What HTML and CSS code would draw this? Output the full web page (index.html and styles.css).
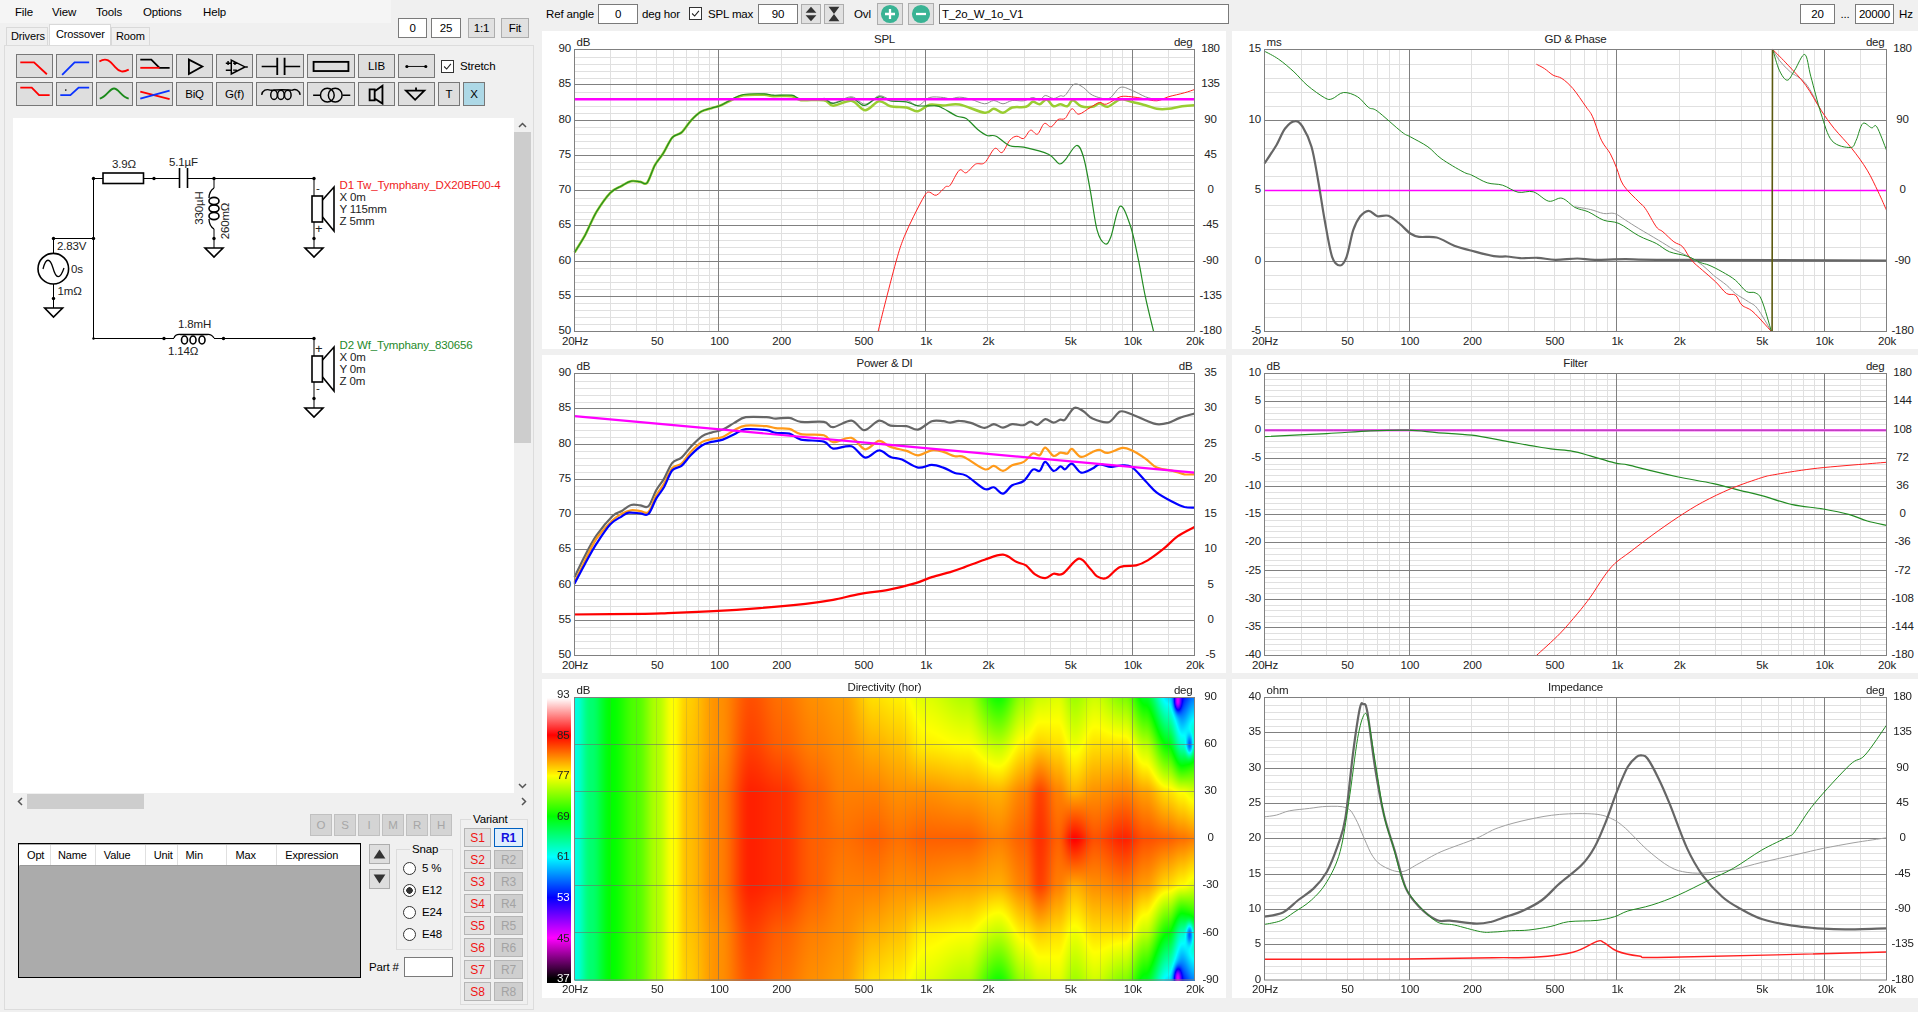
FILE: index.html
```html
<!DOCTYPE html>
<html lang="en">
<head>
  <meta charset="UTF-8">
  <title>VituixCAD</title>
  <link rel="stylesheet" href="styles.css">
</head>
<body>
  <div class="left-panel">
    <div class="top-strip">
      <div class="menu-col">
        <div class="menu-bar">
          <span>File</span><span>View</span><span>Tools</span><span>Options</span><span>Help</span>
        </div>
        <div class="tabs">
          <div class="tab">Drivers</div>
          <div class="tab active">Crossover</div>
          <div class="tab">Room</div>
        </div>
      </div>
      <div class="zoom-controls">
        <div class="field zoom-a">0</div>
        <div class="field zoom-b">25</div>
        <div class="btn zoom-c">1:1</div>
        <div class="btn zoom-d">Fit</div>
      </div>
    </div>

    <div class="tab-page">
      <div class="parts">
        <div class="parts-row">
          <div class="tool"><svg viewBox="0 0 37 24"><path class="thick red" d="M3 8H18L32 21"/></svg></div>
          <div class="tool"><svg viewBox="0 0 37 24"><path class="thick blue" d="M5 21.7L18.6 8H34.5"/></svg></div>
          <div class="tool"><svg viewBox="0 0 37 24"><path class="thick red" d="M2 7C10 2 14 7 19 13S28 19 34 16"/></svg></div>
          <div class="tool"><svg viewBox="0 0 37 24"><path class="thick black" d="M3 5H15L24 14H35"/><path class="thick red" d="M3 14H24"/></svg></div>
          <div class="tool"><svg viewBox="0 0 37 24"><path class="thick black" d="M12.4 5L27 12.5L12.4 20.7Z"/></svg></div>
          <div class="tool"><svg viewBox="0 0 37 24"><path class="mid black" d="M15 5.5L30 13L15 20.7ZM9 9H15M9 16.7H15M30 13H33M11.5 6.5V11M17 9H21M19 7V11M17 16.5H21"/></svg></div>
          <div class="tool wide"><svg viewBox="0 0 48 24"><path class="mid black" d="M4 12.5H21M29 12.5H46"/><path class="thick black" d="M21 3V21.7M29 3V21.7"/></svg></div>
          <div class="tool wide"><svg viewBox="0 0 48 24"><rect class="thick black" x="5" y="7.5" width="38" height="10"/></svg></div>
          <div class="tool">LIB</div>
          <div class="tool"><svg viewBox="0 0 37 24"><path class="thin black" d="M8 12.5H28.6"/><circle cx="8" cy="12.5" r="1.7"/><circle cx="28.6" cy="12.5" r="1.7"/></svg></div>
          <label class="stretch">
            <span class="check"><svg viewBox="0 0 13 13"><path d="M2.5 6.5L5.5 9.5L10.5 3.5"/></svg></span>
            Stretch
          </label>
        </div>
        <div class="parts-row">
          <div class="tool"><svg viewBox="0 0 37 24"><path class="thick red" d="M3 5H15.5L23.5 13.3H35"/></svg></div>
          <div class="tool"><svg viewBox="0 0 37 24"><path class="thick blue" d="M3 13.3H14L23 5H34.5"/><circle cx="9" cy="7.7" r="0.9"/></svg></div>
          <div class="tool"><svg viewBox="0 0 37 24"><path class="thick green" d="M2.4 17C10 15 13 6 18 6S26 15 34 17"/></svg></div>
          <div class="tool"><svg viewBox="0 0 37 24"><path class="thick red" d="M3 9.3L35 17.7"/><path class="thick blue" d="M3 17L35 8.3"/></svg></div>
          <div class="tool">BiQ</div>
          <div class="tool">G(f)</div>
          <div class="tool wide"><svg viewBox="0 0 48 24"><path class="mid black" d="M4 13C5 8 9 6 14 8M37 8C41 6 45 8 46 13M14 8C19 7 35 7 37 8"/><ellipse class="mid black" cx="17.5" cy="13" rx="3.6" ry="5"/><ellipse class="mid black" cx="25" cy="13" rx="3.6" ry="5"/><ellipse class="mid black" cx="32.5" cy="13" rx="3.6" ry="5"/></svg></div>
          <div class="tool wide"><svg viewBox="0 0 48 24"><path class="mid black" d="M4.5 13.3H12.5M36.5 13.3H45"/><circle class="mid black" cx="20" cy="13.3" r="7.5"/><circle class="mid black" cx="28.6" cy="13.3" r="7.5"/></svg></div>
          <div class="tool"><svg viewBox="0 0 37 24"><path class="thick black" d="M11 7H16.5V19H11ZM16.5 9L25 3V22.5L16.5 17"/></svg></div>
          <div class="tool"><svg viewBox="0 0 37 24"><path class="thick black" d="M18 5V8.3M7 8.3H27L17 18.3Z"/></svg></div>
          <div class="tool small">T</div>
          <div class="tool small on">X</div>
        </div>
      </div>

      <div class="canvas-wrap">
        <div class="canvas">
          <svg class="schematic" viewBox="13 118 501 675">
            <g class="wire">
              <path d="M93.5 178.5H103M143.5 178.5H179.5M187.5 178.5H314M93.5 178.5V338.5M53.5 238.5H93.5M53.5 238.5V253M53.5 284V308"/>
              <path d="M214 178.5V188M214 229V248M314 178.5V196M314 222V248"/>
              <path d="M93.5 338.5H174M214 338.5H314M314 338.5V356M314 382V408"/>
            </g>
            <g class="part">
              <rect x="103" y="173" width="40.5" height="10.5"/>
              <path d="M179.5 168V188M187.5 168V188"/>
              <path class="coil" d="M214 188C211 190 209 193 209 198M209 219C209 223 211 227 214 229"/>
              <ellipse cx="214" cy="201" rx="5" ry="3.6"/>
              <ellipse cx="214" cy="208.5" rx="5" ry="3.6"/>
              <ellipse cx="214" cy="216" rx="5" ry="3.6"/>
              <rect x="312" y="196" width="10.5" height="26"/>
              <path d="M322.5 200L334 187V231L322.5 217"/>
              <rect x="312" y="356" width="10.5" height="26"/>
              <path d="M322.5 360L334 347V391L322.5 377"/>
              <path d="M205 248H223L214 257ZM305 248H323L314 257ZM305 408H323L314 417ZM44.7 308H62.6L53.5 317Z"/>
              <circle cx="53.3" cy="268.7" r="15.3"/>
              <path class="coil" d="M43 269C46 257 50 258 53 268C56 279 60 280 64 268"/>
              <path class="coil" d="M174 338C175 335 178 334 181 334.5H207C210 334 212 335 214 338"/>
              <ellipse cx="184.5" cy="340" rx="3" ry="4"/>
              <ellipse cx="193" cy="340" rx="3" ry="4"/>
              <ellipse cx="202" cy="340" rx="3" ry="4"/>
            </g>
            <g class="dot">
              <circle cx="93.5" cy="178.5" r="1.7"/><circle cx="154" cy="178.5" r="1.7"/><circle cx="214" cy="178.5" r="1.7"/>
              <circle cx="314" cy="178.5" r="1.7"/><circle cx="214" cy="238.5" r="1.7"/><circle cx="314" cy="238.5" r="1.7"/>
              <circle cx="53.5" cy="238.5" r="1.7"/><circle cx="93.5" cy="238.5" r="1.7"/><circle cx="53.5" cy="298.5" r="1.7"/>
              <circle cx="93.5" cy="338.5" r="1.2"/><circle cx="164" cy="338.5" r="1.7"/><circle cx="223.5" cy="338.5" r="1.7"/>
              <circle cx="314" cy="338.5" r="1.7"/><circle cx="314" cy="398.5" r="1.7"/>
            </g>
            <g class="label">
              <text x="112" y="168">3.9Ω</text>
              <text x="169" y="166">5.1µF</text>
              <text x="199" y="208" text-anchor="middle" transform="rotate(-90 199 208) translate(0 4)">330µH</text>
              <text x="225" y="221" text-anchor="middle" transform="rotate(-90 225 221) translate(0 4)">260mΩ</text>
              <text x="57" y="250">2.83V</text>
              <text x="71" y="273">0s</text>
              <text x="57.5" y="295">1mΩ</text>
              <text x="178" y="328">1.8mH</text>
              <text x="168" y="355">1.14Ω</text>
              <text x="316" y="192">-</text>
              <text class="sign" x="315" y="233">+</text>
              <text class="sign" x="315" y="353">+</text>
              <text x="316" y="392">-</text>
              <text class="red-text" x="339.5" y="189">D1 Tw_Tymphany_DX20BF00-4</text>
              <text x="339.5" y="201">X 0m</text>
              <text x="339.5" y="213">Y 115mm</text>
              <text x="339.5" y="225">Z 5mm</text>
              <text class="green-text" x="339.5" y="349">D2 Wf_Tymphany_830656</text>
              <text x="339.5" y="361">X 0m</text>
              <text x="339.5" y="373">Y 0m</text>
              <text x="339.5" y="385">Z 0m</text>
            </g>
          </svg>
        </div>
        <div class="vscroll">
          <svg viewBox="0 0 17 14"><path d="M5 9L8.5 5.5L12 9"/></svg>
          <div class="vthumb"></div>
          <div class="fill"></div>
          <svg viewBox="0 0 17 14"><path d="M5 5L8.5 8.5L12 5"/></svg>
        </div>
        <div class="hscroll">
          <svg viewBox="0 0 14 15"><path d="M9 4L5.5 7.5L9 11"/></svg>
          <div class="hthumb"></div>
          <div class="fill"></div>
          <svg viewBox="0 0 14 15"><path d="M5 4L8.5 7.5L5 11"/></svg>
        </div>
      </div>

      <div class="bottom">
        <div class="params">
          <div class="flags">
            <div class="flag">O</div><div class="flag">S</div><div class="flag">I</div>
            <div class="flag">M</div><div class="flag">R</div><div class="flag">H</div>
          </div>
          <div class="params-body">
            <div class="opt-table">
              <div class="opt-head">
                <span class="c-opt">Opt</span>
                <span class="c-name">Name</span>
                <span class="c-value">Value</span>
                <span class="c-unit">Unit</span>
                <span class="c-min">Min</span>
                <span class="c-max">Max</span>
                <span class="c-expr">Expression</span>
              </div>
            </div>
            <div class="side">
              <div class="side-top">
                <div class="arrows">
                  <div class="btn arrow"><svg viewBox="0 0 21 20"><path d="M4 15L10.5 5L17 15Z"/></svg></div>
                  <div class="btn arrow"><svg viewBox="0 0 21 20"><path d="M4 5H17L10.5 15Z"/></svg></div>
                </div>
                <fieldset class="snap">
                  <legend>Snap</legend>
                  <div class="radio-row"><span class="radio"></span>5 %</div>
                  <div class="radio-row"><span class="radio checked"></span>E12</div>
                  <div class="radio-row"><span class="radio"></span>E24</div>
                  <div class="radio-row"><span class="radio"></span>E48</div>
                </fieldset>
              </div>
              <div class="part-row">
                <span>Part #</span>
                <div class="field part-input"></div>
              </div>
            </div>
          </div>
        </div>
        <fieldset class="variant">
          <legend>Variant</legend>
          <div class="variant-grid">
            <div class="s-btn">S1</div><div class="r-btn current">R1</div>
            <div class="s-btn">S2</div><div class="r-btn">R2</div>
            <div class="s-btn">S3</div><div class="r-btn">R3</div>
            <div class="s-btn">S4</div><div class="r-btn">R4</div>
            <div class="s-btn">S5</div><div class="r-btn">R5</div>
            <div class="s-btn">S6</div><div class="r-btn">R6</div>
            <div class="s-btn">S7</div><div class="r-btn">R7</div>
            <div class="s-btn">S8</div><div class="r-btn">R8</div>
          </div>
        </fieldset>
      </div>
    </div>
  </div>

  <div class="right-panel">
    <div class="toolbar">
      <span class="t-ref">Ref angle</span>
      <div class="field t-angle">0</div>
      <span class="t-deg">deg hor</span>
      <span class="check t-check"><svg viewBox="0 0 13 13"><path d="M2.5 6.5L5.5 9.5L10.5 3.5"/></svg></span>
      <span class="t-spl">SPL max</span>
      <div class="field t-max">90</div>
      <div class="btn t-spin"><svg viewBox="0 0 20 20"><path d="M10 2L16 8.5H4ZM4 11.5H16L10 18Z"/></svg></div>
      <div class="btn t-spin"><svg viewBox="0 0 20 20"><path d="M4 2H16L10 10ZM10 10L16 18H4Z"/></svg></div>
      <span class="t-ovl">Ovl</span>
      <div class="btn t-round"><svg viewBox="0 0 25 22"><circle cx="12.5" cy="11" r="10"/><path d="M12.5 5.5V16.5M7 11H18"/></svg></div>
      <div class="btn t-round"><svg viewBox="0 0 25 22"><circle cx="12.5" cy="11" r="10"/><path d="M7 11H18"/></svg></div>
      <div class="field t-name">T_2o_W_1o_V1</div>
      <div class="field t-from">20</div>
      <span class="t-dots">...</span>
      <div class="field t-to">20000</div>
      <span class="t-hz">Hz</span>
    </div>
    <div class="charts">
      <div class="chart-card" id="chart-spl"></div>
      <div class="chart-card" id="chart-gd"></div>
      <div class="chart-card" id="chart-power"></div>
      <div class="chart-card" id="chart-filter"></div>
      <div class="chart-card" id="chart-dir"></div>
      <div class="chart-card" id="chart-imp"></div>
    </div>
  </div>

  <script src="charts.js"></script>
</body>
</html>
```

FILE: styles.css
```css
:root {
  --bg: #f0f0f0;
  --btn: #e1e1e1;
  --btn-border: #adadad;
  --field-border: #7a7a7a;
}
* { box-sizing: border-box; margin: 0; padding: 0; }
html, body { height: 100%; overflow: hidden; }
body {
  display: flex;
  width: 1918px;
  height: 1012px;
  background: var(--bg);
  color: #000;
  font-family: "Liberation Sans", Arial, sans-serif;
  font-size: 11px;
  letter-spacing: -0.15px;
}

.field {
  display: flex;
  align-items: center;
  justify-content: center;
  background: #fff;
  border: 1px solid var(--field-border);
  height: 20px;
  font-size: 11.5px;
}
.btn {
  display: flex;
  align-items: center;
  justify-content: center;
  background: var(--btn);
  border: 1px solid var(--btn-border);
}

/* left side */
.left-panel { width: 534px; flex: none; }
.top-strip { display: flex; height: 45px; }
.menu-col { width: 395px; }
.menu-bar {
  display: flex;
  width: 391px;
  height: 23px;
  align-items: center;
  padding-left: 15px;
  background: #f5f5f5;
  font-size: 11.5px;
}
.menu-bar span:nth-child(1) { width: 37px; }
.menu-bar span:nth-child(2) { width: 44px; }
.menu-bar span:nth-child(3) { width: 47px; }
.menu-bar span:nth-child(4) { width: 60px; }
.tabs { display: flex; align-items: flex-end; height: 22px; padding-left: 6px; }
.tab {
  height: 18px;
  padding: 2px 0 0 4px;
  width: 42px;
  background: #f0f0f0;
  border: 1px solid #d9d9d9;
  border-bottom: none;
  font-size: 11px;
}
.tab:nth-child(3) { width: 39px; }
.tab.active {
  width: 62px;
  height: 21px;
  margin: 0 0 0 1px;
  padding: 3px 0 0 6px;
  background: #fff;
}
.zoom-controls { display: flex; margin-top: 18px; height: 20px; font-size: 11.5px; }
.zoom-a { width: 29px; margin-left: 3px; }
.zoom-b { width: 30px; margin-left: 4px; }
.zoom-c { width: 27px; margin-left: 7px; }
.zoom-d { width: 28px; margin-left: 6px; }

.tab-page {
  margin-left: 4px;
  height: 965px;
  border: 1px solid #dcdcdc;
}
.parts { padding: 8px 0 0 11px; height: 72px; }
.parts-row { display: flex; gap: 3px; height: 24px; margin-bottom: 4px; }
.tool {
  display: flex;
  align-items: center;
  justify-content: center;
  width: 37px;
  height: 24px;
  background: #dedede;
  border: 1px solid #777;
  font-size: 11.5px;
}
.tool svg { width: 100%; height: 100%; }
.tool.wide { width: 48px; }
.tool.small { width: 22px; }
.tool.on { background: #add8e6; }
.tool path, .tool rect, .tool circle, .tool ellipse { fill: none; }
.tool circle:not([class]) { fill: #000; }
.thick { stroke-width: 2px; }
.mid { stroke-width: 1.6px; }
.thin { stroke-width: 1px; }
.red { stroke: #f00; }
.blue { stroke: #0a32ff; }
.green { stroke: #1a8a1a; }
.black { stroke: #000; }
.stretch { display: flex; align-items: center; gap: 6px; margin-left: 3px; font-size: 11.5px; }
.check {
  display: block;
  width: 13px;
  height: 13px;
  background: #fff;
  border: 1px solid #333;
}
.check svg { display: block; width: 11px; height: 11px; }
.check path { fill: none; stroke: #222; stroke-width: 1.3px; }

.canvas-wrap {
  display: grid;
  grid-template-columns: 501px 17px;
  grid-template-rows: 675px 17px;
  margin-left: 8px;
}
.canvas { background: #fff; }
.schematic { display: block; width: 501px; height: 675px; }
.wire path { fill: none; stroke: #000; stroke-width: 1px; }
.part rect, .part path, .part circle, .part ellipse { fill: none; stroke: #000; stroke-width: 1.6px; }
.part .coil { stroke-width: 1.3px; }
.dot circle { fill: #000; }
.label text { font-size: 11.5px; fill: #222; }
.label .sign { font-size: 13px; }
.label .red-text { fill: #f01c1c; }
.label .green-text { fill: #1f8a2a; }
.vscroll { display: flex; flex-direction: column; }
.vscroll svg { width: 17px; height: 14px; flex: none; }
.vthumb { height: 311px; background: #cdcdcd; flex: none; }
.fill { flex: 1; }
.hscroll { display: flex; grid-column: 1 / 3; align-items: center; }
.hscroll svg { width: 14px; height: 15px; flex: none; }
.vscroll path, .hscroll path { fill: none; stroke: #555; stroke-width: 1.5px; }
.hthumb { width: 117px; height: 15px; background: #cdcdcd; flex: none; }

.bottom { display: flex; padding-left: 13px; }
.params { width: 442px; }
.flags { display: flex; justify-content: flex-end; gap: 2px; padding-right: 8px; height: 33px; padding-top: 4px; }
.flag {
  display: flex;
  align-items: center;
  justify-content: center;
  width: 22px;
  height: 22px;
  background: #d4d4d4;
  border: 1px solid #c0c0c0;
  color: #a6a6a6;
  font-size: 11.5px;
}
.params-body { display: flex; }
.opt-table {
  width: 343px;
  height: 135px;
  background: #ababab;
  border: 1px solid #000;
  padding-top: 1px;
}
.opt-head {
  display: flex;
  height: 21px;
  background: #fff;
  border-left: 1px solid #fff;
  border-bottom: 1px solid #999;
}
.opt-head span {
  display: flex;
  align-items: center;
  height: 20px;
  border-right: 1px solid #e0e0e0;
}
.c-opt { width: 31px; padding-left: 7px; }
.c-name { width: 45px; padding-left: 7px; }
.c-value { width: 50px; padding-left: 8px; }
.c-unit { width: 32px; padding-left: 8px; }
.c-min { width: 50px; padding-left: 8px; }
.c-max { width: 50px; padding-left: 8px; }
.c-expr { width: 83px; padding-left: 8px; border-right: none !important; }
.side { width: 84px; margin-left: 8px; }
.side-top { display: flex; }
.arrows { display: flex; flex-direction: column; gap: 5px; width: 27px; padding-top: 1px; }
.arrow { width: 21px; height: 20px; background: #dedede; }
.arrow svg { width: 21px; height: 20px; }
.arrow path { fill: #333; }
fieldset { border: 1px solid #dcdcdc; }
legend { margin-left: 7px; padding: 0 2px; line-height: 13px; font-size: 11.5px; }
.snap { width: 57px; height: 107px; padding: 1px 0 0 6px; }
.radio-row { display: flex; align-items: center; height: 22px; gap: 6px; font-size: 11.5px; }
.radio {
  display: block;
  width: 13px;
  height: 13px;
  border: 1px solid #333;
  border-radius: 50%;
  background: #fff;
}
.radio.checked { background: radial-gradient(circle, #333 0 3px, #fff 3.5px); }
.part-row { display: flex; align-items: center; justify-content: space-between; margin-top: 7px; font-size: 11.5px; }
.part-input { width: 49px; height: 20px; }
.variant { width: 68px; height: 192px; margin: 3px 0 0 0; padding: 2px 0 0 3px; }
.variant-grid { display: grid; grid-template-columns: 27px 29px; grid-auto-rows: 19px; gap: 3px 3px; }
.s-btn, .r-btn {
  display: flex;
  align-items: center;
  justify-content: center;
  font-size: 12px;
  border: 1px solid #b5b5b5;
}
.s-btn { background: #e1e1e1; color: #f01414; }
.r-btn { background: #cfcfcf; color: #a3a3a3; }
.r-btn.current {
  background: #dfeefc;
  color: #1010e0;
  font-weight: bold;
  border: 1px solid #0060c0;
}

/* right side */
.right-panel { flex: 1; margin-left: 8px; }
.toolbar { display: flex; align-items: center; height: 31px; padding-bottom: 4px; font-size: 11.5px; }
.toolbar svg { display: block; }
.t-ref { margin-left: 4px; width: 52px; }
.t-angle { width: 40px; }
.t-deg { margin-left: 4px; width: 43px; }
.t-check { margin-left: 4px; }
.t-spl { margin-left: 6px; width: 50px; }
.t-max { width: 40px; }
.t-spin { width: 20px; height: 20px; margin-left: 3px; }
.t-spin svg { width: 18px; height: 18px; }
.t-spin path { fill: #333; }
.t-ovl { margin-left: 10px; width: 23px; }
.t-round { width: 26px; height: 22px; margin-right: 5px; }
.t-round svg { width: 24px; height: 20px; }
.t-round circle { fill: #39b394; }
.t-round path { fill: none; stroke: #fff; stroke-width: 2.5px; }
.t-name { width: 290px; justify-content: flex-start; padding-left: 2px; margin-right: 571px; }
.t-from { width: 35px; }
.t-dots { width: 20px; text-align: center; }
.t-to { width: 39px; }
.t-hz { margin-left: 5px; }

.charts {
  display: grid;
  grid-template-columns: 684px 686px;
  grid-template-rows: 318px 318px 319px;
  gap: 6px;
}
.chart-card { position: relative; background: #fff; }
.chart-card svg { position: absolute; top: 0; left: 0; width: 100%; height: 100%; }
.chart-card canvas { position: absolute; }
.chart-card text { font-size: 11.5px; fill: #222; letter-spacing: -0.2px; }
.chart-card .title { font-size: 11.5px; }
.chart-card .on-dark { fill: #fff; }
.grid-minor { stroke: #e0e0e0; stroke-width: 1; fill: none; }
.grid-major { stroke: #808080; stroke-width: 1; fill: none; }
.dir-minor { stroke: rgba(120, 120, 120, 0.2); stroke-width: 1; fill: none; }
.dir-major { stroke: rgba(110, 110, 110, 0.6); stroke-width: 1; fill: none; }
.curve { fill: none; stroke-linejoin: round; }
```

FILE: charts.js
```js
// log frequency axis shared by every plot
const FREQ_LABELS = [[20, '20Hz'], [50, '50'], [100, '100'], [200, '200'], [500, '500'], [1000, '1k'], [2000, '2k'], [5000, '5k'], [10000, '10k'], [20000, '20k']];
const MINOR_FREQS = [30, 40, 60, 70, 80, 90, 200, 300, 400, 500, 600, 700, 800, 900, 2000, 3000, 4000, 5000, 6000, 7000, 8000, 9000, 20, 50, 15000, 20000];
const DECADES = [100, 1000, 10000];

const LEFT_X = 32.5;
const LEFT_W = 620;
const RIGHT_W = 622;

// curves are traced in each plot's own units, see `trace` in the config
const SPL_LOW = '97,757 120,705 145,635 175,578 200,557 220,543 240,545 255,548 272,495 290,460 310,412 330,397 350,362 372,335 395,324 415,316';

const CHARTS = {
  'chart-spl': {
    title: 'SPL', unitL: 'dB', unitR: 'deg', width: LEFT_W, top: 18.5, height: 282,
    left: [90, 85, 80, 75, 70, 65, 60, 55, 50],
    right: [180, 135, 90, 45, 0, -45, -90, -135, -180],
    trace: [97, 148, 1447, 994],
    curves: [
      { color: '#9acd32', w: 2.5, pts: SPL_LOW + ' 440,299 465,285 510,284 530,288 570,288 590,300 640,300 660,317 700,302 730,330 760,303 785,318 820,322 845,333 870,314 900,316 935,313 990,338 1010,326 1030,338 1050,322 1080,320 1095,305 1110,312 1125,298 1140,318 1155,312 1170,318 1182,300 1200,318 1225,320 1240,310 1258,320 1285,298 1310,305 1340,315 1365,326 1390,326 1420,318 1447,315' },
      { color: '#8c8c8c', w: 1, pts: '640,293 660,308 700,290 730,312 760,287 785,298 820,300 845,316 870,292 900,292 915,296 935,291 960,297 990,311 1010,301 1030,311 1050,301 1075,302 1095,292 1110,300 1122,286 1140,295 1155,287 1165,286 1185,252 1205,262 1225,285 1260,295 1285,262 1310,270 1340,290 1360,297' },
      { color: '#ff2020', w: 1, pts: '758,994 775,900 800,770 815,710 835,650 860,585 870,576 885,585 905,560 915,555 935,510 950,518 970,492 990,488 1012,445 1028,457 1045,420 1060,408 1075,415 1090,390 1105,402 1120,370 1135,380 1150,358 1165,355 1180,326 1195,342 1220,322 1240,307 1255,312 1285,290 1310,290 1335,295 1365,302 1390,290 1425,278 1447,268' },
      { color: '#228b22', w: 1.2, pts: SPL_LOW + ' 440,297 465,283 510,281 530,285 570,285 590,296 640,296 660,310 700,294 728,316 760,290 785,302 820,305 845,317 885,317 900,325 930,348 950,355 975,388 995,406 1015,408 1045,437 1075,441 1130,463 1152,491 1165,480 1190,436 1205,470 1220,570 1235,690 1252,731 1265,710 1285,618 1308,680 1325,780 1340,890 1358,994' },
      { color: '#ff00ff', w: 2.5, pts: '97,297 1447,297' },
    ],
  },
  'chart-gd': {
    title: 'GD & Phase', unitL: 'ms', unitR: 'deg', width: RIGHT_W, top: 18.5, height: 282,
    left: [15, 10, 5, 0, -5],
    right: [180, 90, 0, -90, -180],
    trace: [78, 148, 1494, 994],
    curves: [
      { color: '#ff00ff', w: 1.5, pts: '78,571 1494,571' },
      { color: '#666666', w: 2.2, pts: '78,490 105,435 125,385 148,363 165,380 185,440 200,540 215,660 232,770 250,796 265,770 280,690 295,650 315,632 335,648 360,647 385,670 410,700 430,710 470,712 510,737 545,750 600,768 630,769 660,774 700,773 740,779 790,775 830,779 900,777 1000,779 1494,781' },
      { color: '#999999', w: 1, pts: '785,620 820,628 850,640 875,640 900,660 930,685 975,720 1010,748 1045,770 1075,795 1100,825 1130,855 1150,880 1180,905 1200,925 1232,994' },
      { color: '#999999', w: 1, pts: '1235,148 1250,180 1275,215 1310,250 1345,330' },
      { color: '#ff2020', w: 1, pts: '697,192 715,205 735,225 755,235 780,265 810,320 825,350 845,420 865,460 880,505 895,555 930,605 945,625 970,680 985,695 1010,725 1030,740 1050,780 1075,810 1105,845 1130,880 1150,885 1165,915 1190,935 1232,994' },
      { color: '#ff2020', w: 1, pts: '1235,148 1270,195 1310,255 1345,330 1375,385 1415,445 1450,510 1475,575 1494,630' },
      { color: '#228b22', w: 1, pts: '78,153 110,177 145,215 175,255 215,293 232,296 258,277 290,290 315,322 335,333 390,395 410,410 450,440 480,475 530,515 550,525 585,548 620,555 655,576 690,575 725,603 755,594 785,622 815,635 850,660 885,670 930,707 970,730 1000,755 1040,768 1070,787 1090,795 1120,815 1150,840 1175,874 1195,878 1210,900 1232,994' },
      { color: '#228b22', w: 1, pts: '1235,148 1250,210 1268,240 1285,210 1308,163 1322,230 1345,340 1370,422 1412,442 1425,420 1440,370 1460,383 1472,380 1494,450' },
      { color: '#5c5a10', w: 1.6, pts: '1233.5,994 1234.5,148' },
    ],
  },
  'chart-power': {
    title: 'Power & DI', unitL: 'dB', unitR: 'dB', width: LEFT_W, top: 18.5, height: 282,
    left: [90, 85, 80, 75, 70, 65, 60, 55, 50],
    right: [35, 30, 25, 20, 15, 10, 5, 0, -5],
    trace: [97, 70, 1447, 915],
    curves: [
      { color: '#666666', w: 2.2, pts: '97,680 120,615 145,555 180,497 200,482 220,464 240,465 258,468 275,420 292,385 310,338 330,322 350,290 375,258 395,247 420,238 445,218 470,201 515,201 535,205 565,203 590,215 640,215 660,231 700,211 728,240 760,211 785,226 820,228 845,238 875,213 900,213 915,217 935,212 960,218 990,233 1010,222 1030,232 1050,222 1075,225 1090,214 1105,224 1122,207 1140,217 1155,208 1165,208 1185,173 1205,183 1225,205 1260,216 1285,184 1310,192 1340,210 1365,222 1390,218 1415,203 1447,190' },
      { color: '#ff9a1a', w: 2.2, pts: '97,695 120,630 145,565 180,510 200,490 220,480 240,482 258,485 275,435 292,400 310,353 330,340 350,305 375,275 395,267 420,260 445,240 470,226 515,228 535,234 565,236 590,252 640,255 660,276 700,263 730,297 760,272 785,290 820,302 845,315 875,300 900,305 925,318 945,320 990,357 1010,347 1030,362 1050,345 1075,335 1095,310 1110,315 1122,292 1140,317 1155,307 1170,310 1180,296 1200,320 1225,305 1240,299 1258,308 1290,293 1310,300 1340,325 1365,352 1400,362 1425,372 1447,372' },
      { color: '#0000ff', w: 2.2, pts: '97,700 120,640 145,580 175,522 200,498 215,487 240,489 258,491 275,445 292,410 310,360 330,347 350,315 375,285 395,275 420,268 445,252 470,237 515,240 535,248 565,250 590,268 640,274 660,295 700,288 730,322 760,300 785,320 810,328 845,352 875,344 900,352 925,368 950,376 990,416 1010,411 1030,430 1050,405 1075,392 1095,358 1110,362 1122,335 1140,362 1155,348 1165,357 1180,340 1200,367 1225,355 1240,342 1265,350 1285,346 1310,350 1340,392 1365,427 1400,455 1425,470 1447,472' },
      { color: '#ff0000', w: 2.2, pts: '97,792 250,790 300,788 400,782 500,773 600,760 660,748 720,730 780,718 840,698 875,680 915,665 945,651 990,628 1030,613 1060,635 1080,645 1100,672 1122,683 1140,670 1160,670 1195,625 1220,655 1235,678 1255,683 1285,650 1320,645 1345,630 1380,595 1410,558 1447,530' },
      { color: '#ff00ff', w: 2.2, pts: '97,198 1447,367' },
    ],
  },
  'chart-filter': {
    title: 'Filter', unitL: 'dB', unitR: 'deg', width: RIGHT_W, top: 18.5, height: 282,
    left: [10, 5, 0, -5, -10, -15, -20, -25, -30, -35, -40],
    right: [180, 144, 108, 72, 36, 0, -36, -72, -108, -144, -180],
    trace: [78, 70, 1494, 915],
    curves: [
      { color: '#ff60ff', w: 2.4, pts: '78,240 1494,240' },
      { color: '#8a2a8a', w: 0.8, pts: '78,240 1494,240' },
      { color: '#228b22', w: 1.2, pts: '78,259 220,250 320,242 405,240 470,247 550,255 620,271 680,285 730,296 780,303 820,317 875,338 905,344 960,362 1020,380 1100,400 1160,420 1210,436 1280,463 1350,476 1410,493 1450,512 1494,525' },
      { color: '#ff2020', w: 1, pts: '697,915 750,850 790,790 820,740 850,680 875,640 910,605 960,555 1020,500 1075,456 1140,415 1210,382 1240,373 1300,360 1350,352 1420,344 1494,336' },
    ],
  },
  'chart-dir': {
    title: 'Directivity (hor)', unitL: 'dB', unitR: 'deg', width: LEFT_W, top: 18.5, height: 282.5,
    right: [90, 60, 30, 0, -30, -60, -90],
    directivity: true,
    curves: [],
  },
  'chart-imp': {
    title: 'Impedance', unitL: 'ohm', unitR: 'deg', width: RIGHT_W, top: 18.5, height: 282.5,
    left: [40, 35, 30, 25, 20, 15, 10, 5, 0],
    right: [180, 135, 90, 45, 0, -45, -90, -135, -180],
    trace: [78, 67, 1494, 915],
    curves: [
      { color: '#a0a0a0', w: 1, pts: '78,425 105,420 135,407 180,400 220,394 265,398 285,430 305,490 325,545 350,575 390,590 430,565 480,530 560,490 610,458 680,433 750,418 830,417 870,432 900,460 950,525 1000,575 1040,592 1090,593 1150,582 1210,562 1290,538 1350,520 1420,503 1494,488' },
      { color: '#666666', w: 2.2, pts: '78,725 120,712 155,675 190,640 220,590 245,510 262,430 280,230 295,100 303,87 312,110 330,280 350,420 375,530 400,640 430,695 470,735 500,737 560,746 595,740 630,724 665,708 710,675 750,625 800,570 830,515 855,440 880,350 905,275 925,245 937,241 950,250 975,310 1000,385 1040,520 1075,600 1120,665 1160,700 1210,732 1280,752 1350,761 1400,763 1494,760' },
      { color: '#228b22', w: 1, pts: '78,748 115,737 145,712 185,675 220,620 250,530 270,380 290,190 305,118 315,140 330,260 350,420 370,510 395,625 425,685 470,740 510,750 570,770 600,771 640,767 680,765 730,754 770,740 835,736 875,725 905,708 960,690 1020,660 1090,615 1145,580 1210,525 1270,485 1285,470 1330,385 1410,270 1445,240 1494,150' },
      { color: '#ff2020', w: 1.4, pts: '78,853 400,852 600,848 690,847 780,832 835,799 850,802 880,828 930,843 1000,847 1494,831' },
    ],
  },
};

function svgEl(parent, name, attrs, text) {
  const el = document.createElementNS('http://www.w3.org/2000/svg', name);
  for (const key in attrs) el.setAttribute(key, attrs[key]);
  if (text !== undefined) el.textContent = text;
  parent.appendChild(el);
  return el;
}

function smoothPath(pts) {
  let d = `M${pts[0][0].toFixed(1)} ${pts[0][1].toFixed(1)}`;
  for (let i = 0; i < pts.length - 1; i++) {
    const p0 = pts[Math.max(i - 1, 0)];
    const p1 = pts[i];
    const p2 = pts[i + 1];
    const p3 = pts[Math.min(i + 2, pts.length - 1)];
    const c1x = p1[0] + (p2[0] - p0[0]) / 6;
    const c1y = p1[1] + (p2[1] - p0[1]) / 6;
    const c2x = p2[0] - (p3[0] - p1[0]) / 6;
    const c2y = p2[1] - (p3[1] - p1[1]) / 6;
    d += `C${c1x.toFixed(1)} ${c1y.toFixed(1)} ${c2x.toFixed(1)} ${c2y.toFixed(1)} ${p2[0].toFixed(1)} ${p2[1].toFixed(1)}`;
  }
  return d;
}

function drawChart(id, cfg) {
  const card = document.getElementById(id);
  const plot = { x: LEFT_X, y: cfg.top, w: cfg.width, h: cfg.height };
  const cardW = card.clientWidth;
  const cardH = card.clientHeight;

  if (cfg.directivity) drawHeatmap(card, plot);

  const svg = svgEl(card, 'svg', { viewBox: `0 0 ${cardW} ${cardH}` });
  const freqX = (f) => plot.x + (Math.log10(f / 20) / 3) * plot.w;
  const bottom = plot.y + plot.h;
  const right = plot.x + plot.w;
  const minorClass = cfg.directivity ? 'dir-minor' : 'grid-minor';
  const majorClass = cfg.directivity ? 'dir-major' : 'grid-major';

  if (!cfg.directivity) {
    const rows = cfg.left.length - 1;
    for (let i = 0; i < rows * 5; i++) {
      if (i % 5 === 0) continue;
      const y = Math.round(plot.y + (i / (rows * 5)) * plot.h) + 0.5;
      svgEl(svg, 'path', { class: minorClass, d: `M${plot.x} ${y}H${right}` });
    }
  }
  MINOR_FREQS.forEach((f) => {
    const x = Math.round(freqX(f) - 0.5) + 0.5;
    svgEl(svg, 'path', { class: minorClass, d: `M${x} ${plot.y}V${bottom}` });
  });
  DECADES.forEach((f) => {
    const x = Math.round(freqX(f) - 0.5) + 0.5;
    svgEl(svg, 'path', { class: majorClass, d: `M${x} ${plot.y}V${bottom}` });
  });

  const rowCount = cfg.right.length - 1;
  const leftCount = cfg.left ? cfg.left.length - 1 : rowCount;
  for (let i = 1; i < leftCount; i++) {
    const y = Math.round(plot.y + (i / leftCount) * plot.h - 0.5) + 0.5;
    svgEl(svg, 'path', { class: majorClass, d: `M${plot.x} ${y}H${right}` });
  }

  if (cfg.trace) {
    const [x0, y0, x1, y1] = cfg.trace;
    cfg.curves.forEach((c) => {
      const pts = c.pts.split(' ').map((p) => {
        const [zx, zy] = p.split(',').map(Number);
        return [plot.x + ((zx - x0) / (x1 - x0)) * plot.w, plot.y + ((zy - y0) / (y1 - y0)) * plot.h];
      });
      svgEl(svg, 'path', { class: 'curve', d: smoothPath(pts), stroke: c.color, 'stroke-width': c.w });
    });
  }

  svgEl(svg, 'rect', { class: 'grid-major', x: plot.x, y: plot.y, width: plot.w, height: plot.h });

  // axis text
  const cx = plot.x + plot.w / 2;
  svgEl(svg, 'text', { class: 'title', x: cx, y: 12, 'text-anchor': 'middle' }, cfg.title);
  svgEl(svg, 'text', { x: plot.x + 2, y: 15 }, cfg.unitL);
  svgEl(svg, 'text', { x: right - 2, y: 15, 'text-anchor': 'end' }, cfg.unitR);
  if (cfg.left) {
    cfg.left.forEach((v, i) => {
      const y = plot.y + (i / leftCount) * plot.h + 2.6;
      svgEl(svg, 'text', { x: plot.x - 3.5, y: y, 'text-anchor': 'end' }, v);
    });
  }
  cfg.right.forEach((v, i) => {
    const y = plot.y + (i / rowCount) * plot.h + 2.6;
    svgEl(svg, 'text', { x: right + 16, y: y, 'text-anchor': 'middle' }, v);
  });
  FREQ_LABELS.forEach(([f, label]) => {
    svgEl(svg, 'text', { x: freqX(f) + 0.5, y: bottom + 13, 'text-anchor': 'middle' }, label);
  });

  if (cfg.directivity) drawLegend(svg);
}

// dB to colour, same scale as the legend bar
const COLOR_STOPS = [[37, 0, 0, 0], [45, 255, 0, 255], [53, 0, 0, 255], [61, 0, 255, 255], [69, 0, 255, 0], [77, 255, 255, 0], [85, 255, 0, 0], [93, 255, 255, 255]];

function dbColor(db) {
  const v = Math.min(Math.max(db, 37), 93);
  const i = Math.min(Math.floor((v - 37) / 8), 6);
  const a = COLOR_STOPS[i];
  const b = COLOR_STOPS[i + 1];
  const t = (v - a[0]) / 8;
  return [a[1] + (b[1] - a[1]) * t, a[2] + (b[2] - a[2]) * t, a[3] + (b[3] - a[3]) * t];
}

// columns: x position (1350 wide trace), dB at 0, 30, 60, 90 degrees
const DIR_TABLE = [
  [0, 62, 62, 62, 62], [33, 65.5, 65.5, 65.5, 65.5], [78, 69, 69, 69, 69], [133, 71.5, 71.5, 71.5, 71.5],
  [178, 74.5, 74.5, 74.5, 74.5], [213, 77, 77, 77, 77], [243, 79, 79, 78.8, 78.5], [313, 81, 81, 80.5, 80.5],
  [383, 84, 84, 83, 82.5], [448, 83.5, 83.5, 82, 81.5], [523, 82, 82, 81, 80.5], [583, 81.5, 81, 80.5, 80],
  [653, 82, 81, 79.5, 78], [703, 81.5, 80.5, 79, 77.5], [763, 82, 80.5, 77.5, 76], [853, 82, 80, 77, 74.5],
  [923, 81, 79.5, 75, 69.5], [978, 82, 81, 77.5, 74], [1013, 83.5, 83, 78.5, 75.5], [1053, 82, 81, 78, 76],
  [1088, 85, 79.5, 76.5, 74], [1133, 82.5, 80.5, 78, 75.5], [1198, 84, 81, 78, 73], [1243, 82.5, 80, 75, 68],
  [1293, 82, 78, 69, 60], [1323, 81.5, 77, 63, 54], [1350, 81, 76, 66, 57],
];

function dirLevel(u, deg) {
  let i = 0;
  while (i < DIR_TABLE.length - 2 && DIR_TABLE[i + 1][0] < u) i++;
  const a = DIR_TABLE[i];
  const b = DIR_TABLE[i + 1];
  const t = (u - a[0]) / (b[0] - a[0]);
  const s = t * t * (3 - 2 * t);
  const pos = Math.min(Math.abs(deg) / 30, 2.999);
  const k = Math.floor(pos);
  const f = pos - k;
  const atA = a[k + 1] + (a[k + 2] - a[k + 1]) * f;
  const atB = b[k + 1] + (b[k + 2] - b[k + 1]) * f;
  let db = atA + (atB - atA) * s;
  // the two deep nulls near 20k
  const abs = Math.abs(deg);
  db -= 9 * Math.exp(-(((u - 1340) / 8) ** 2) - (((abs - 60) / 7) ** 2));
  db -= 10 * Math.exp(-(((u - 1313) / 8) ** 2) - (((abs - 88) / 6) ** 2));
  return db;
}

function drawHeatmap(card, plot) {
  const canvas = document.createElement('canvas');
  const w = Math.round(plot.w);
  const h = Math.round(plot.h);
  canvas.width = w;
  canvas.height = h;
  canvas.style.left = plot.x + 'px';
  canvas.style.top = plot.y + 'px';
  const ctx = canvas.getContext('2d');
  const img = ctx.createImageData(w, h);
  for (let y = 0; y < h; y++) {
    const deg = 90 - (y / (h - 1)) * 180;
    for (let x = 0; x < w; x++) {
      const c = dbColor(dirLevel((x / (w - 1)) * 1350, deg));
      const p = (y * w + x) * 4;
      img.data[p] = c[0];
      img.data[p + 1] = c[1];
      img.data[p + 2] = c[2];
      img.data[p + 3] = 255;
    }
  }
  ctx.putImageData(img, 0, 0);
  card.appendChild(canvas);
}

function drawLegend(svg) {
  const defs = svgEl(svg, 'defs', {});
  const grad = svgEl(defs, 'linearGradient', { id: 'dir-scale', x1: 0, y1: 0, x2: 0, y2: 1 });
  const top = 15;
  const step = 40.6;
  const barTop = 19;
  const barBottom = 304;
  COLOR_STOPS.slice().reverse().forEach((stop, i) => {
    const y = top + i * step + 0.5;
    const offset = Math.min(Math.max((y - barTop) / (barBottom - barTop), 0), 1);
    svgEl(grad, 'stop', { offset: offset.toFixed(3), 'stop-color': `rgb(${stop[1]},${stop[2]},${stop[3]})` });
  });
  svgEl(svg, 'rect', { x: 5, y: barTop, width: 24, height: barBottom - barTop, fill: 'url(#dir-scale)' });
  [93, 85, 77, 69, 61, 53, 45, 37].forEach((v, i) => {
    const dark = v === 53 || v === 37;
    svgEl(svg, 'text', { class: dark ? 'on-dark' : '', x: 27.5, y: top + i * step + 4, 'text-anchor': 'end' }, v);
  });
}

for (const id in CHARTS) drawChart(id, CHARTS[id]);
```
